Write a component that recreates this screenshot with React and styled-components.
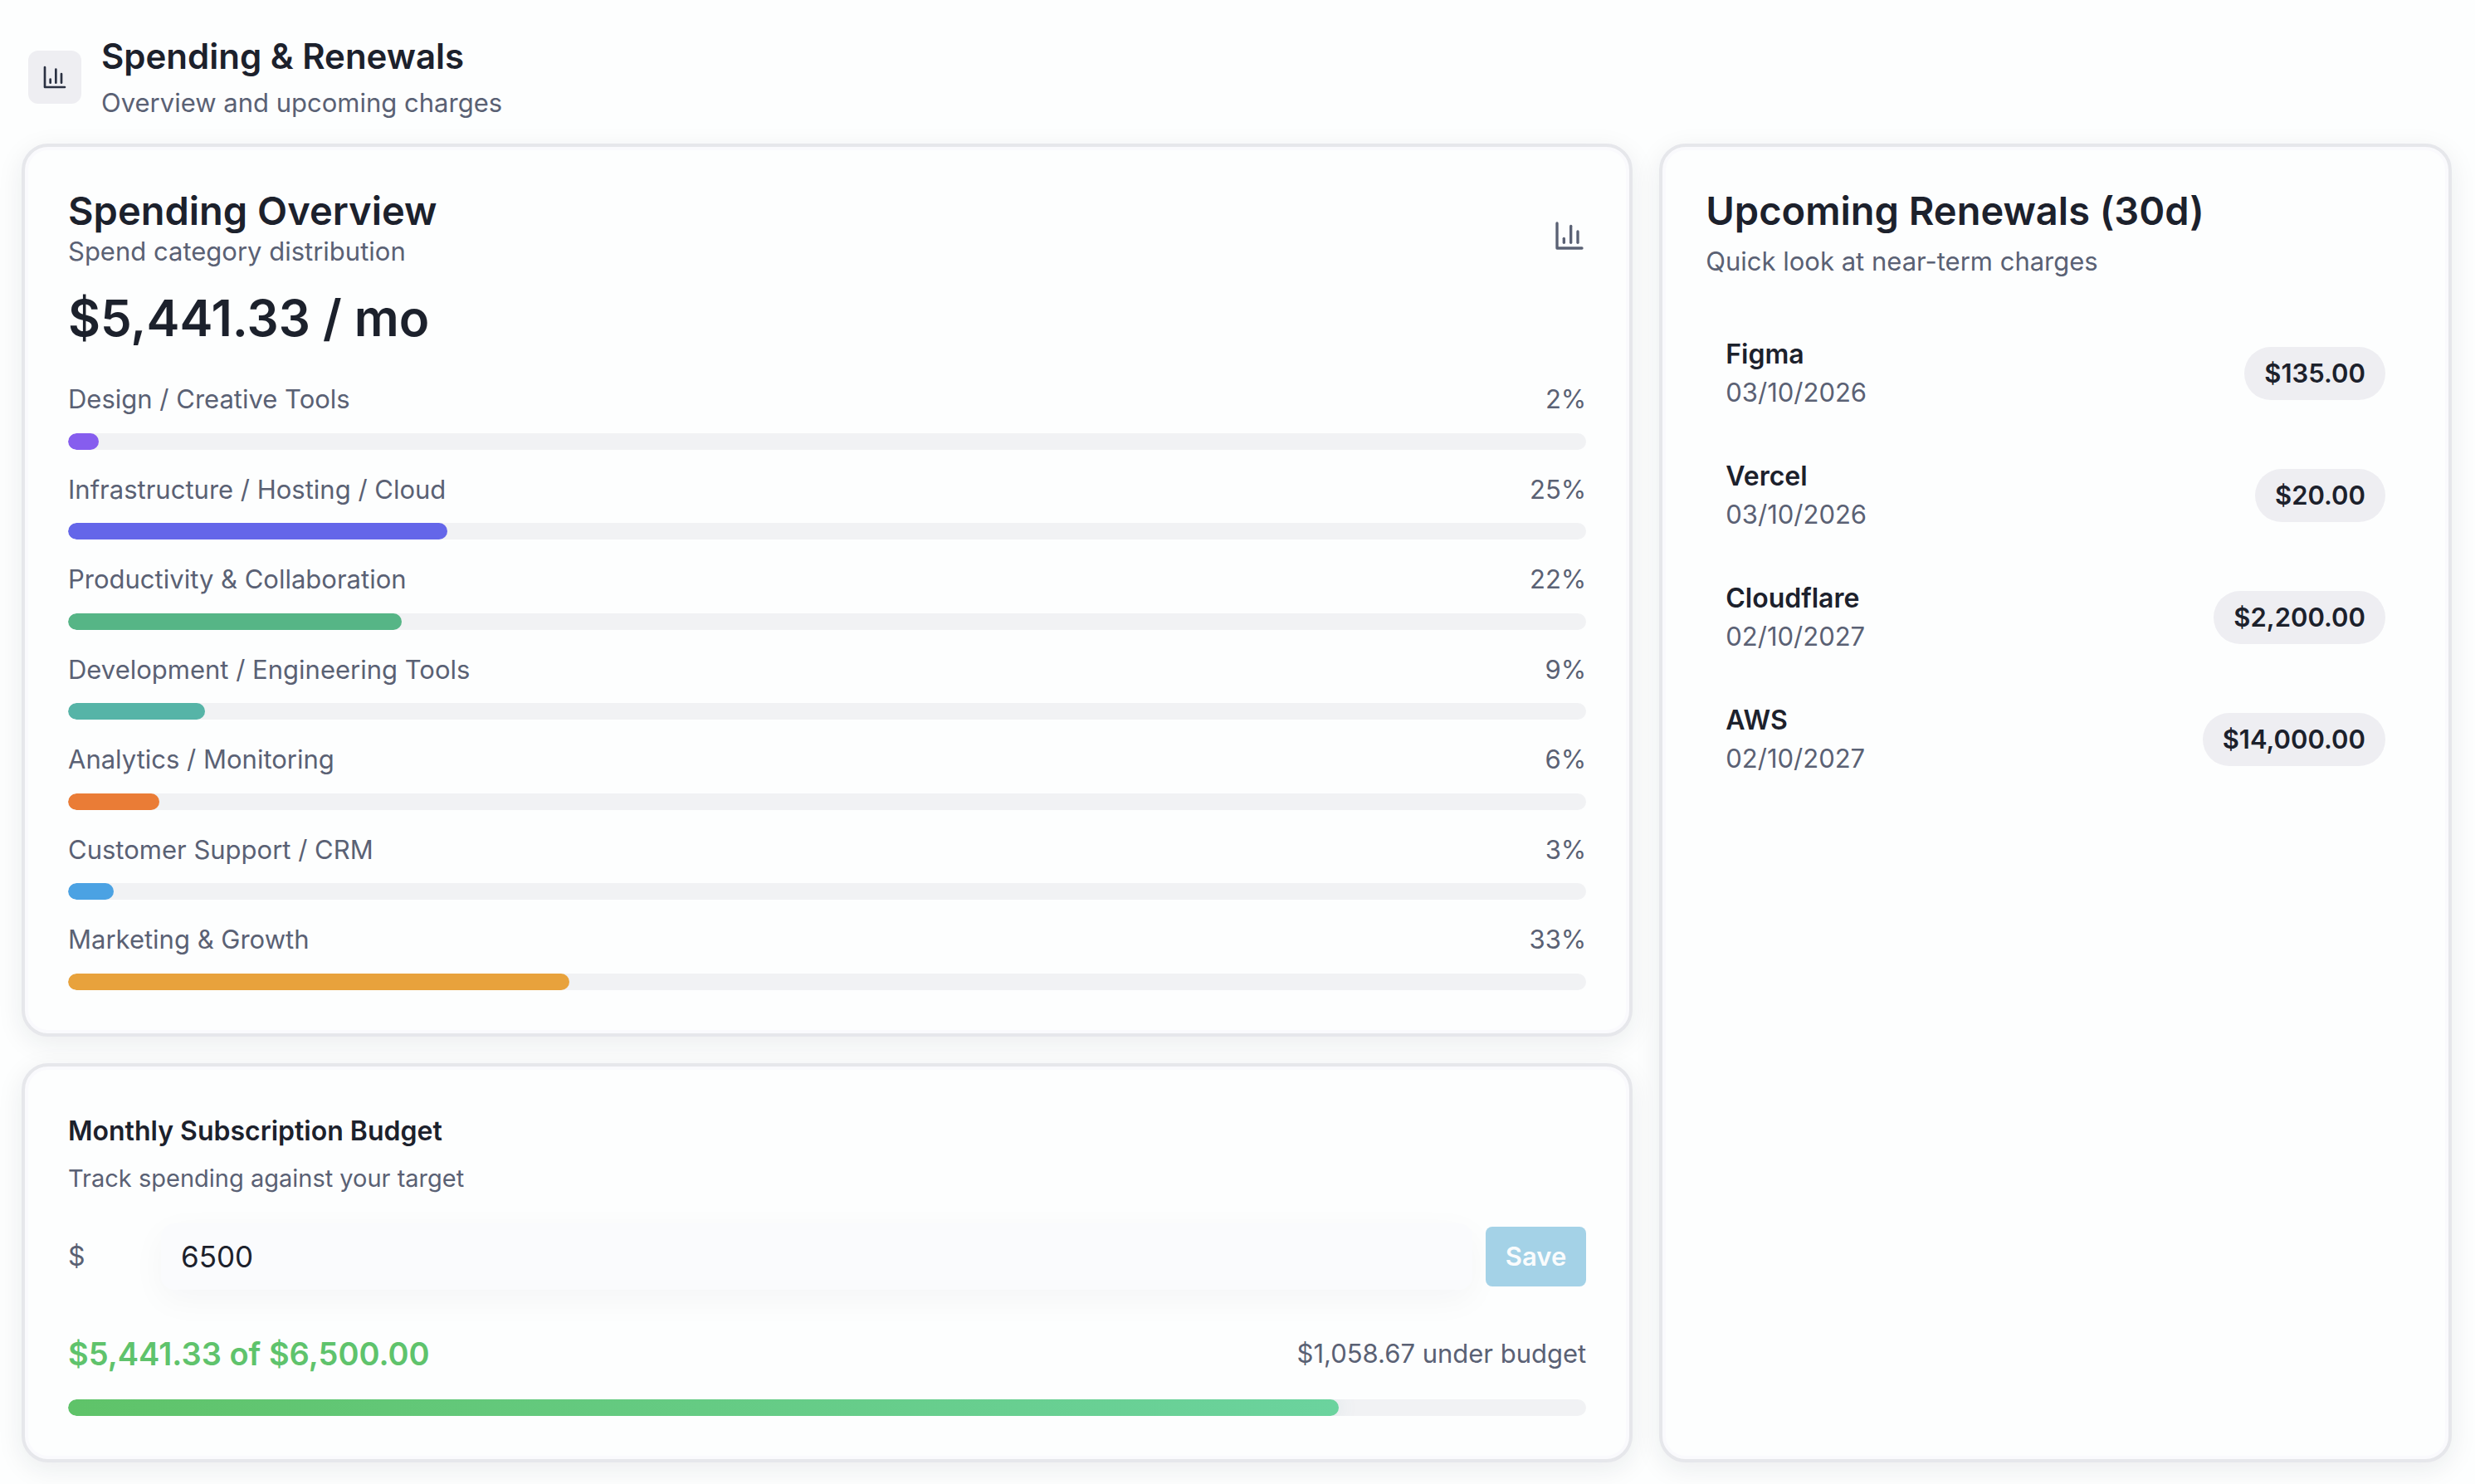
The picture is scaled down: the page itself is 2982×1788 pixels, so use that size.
import React, { useState } from 'react';
import styled, { createGlobalStyle } from 'styled-components';

const color = {
  page: '#fdfefe',
  ink: '#1c212c',
  muted: '#5a6174',
  line: '#e6e7eb',
  track: '#f1f2f4',
  chip: '#eeeef2',
  green: '#5fc36c',
};

const GlobalStyle = createGlobalStyle`
  *, *::before, *::after { box-sizing: border-box; }
  body {
    margin: 0;
    background: ${color.page};
    color: ${color.ink};
    font-family: Inter, "Liberation Sans", sans-serif;
    font-size: 31px;
    line-height: 47px;
  }
  h1, h2, p, ul { margin: 0; padding: 0; }
  ul { list-style: none; }
`;

const Page = styled.main`
  padding: 38px 28px 26px 26px;
`;

const PageHeader = styled.header`
  display: flex;
  align-items: center;
  gap: 24px;
  padding: 0 8px;
  margin-bottom: 26px;
`;

const IconTile = styled.span`
  display: grid;
  place-items: center;
  width: 64px;
  height: 64px;
  border-radius: 12px;
  background: ${color.chip};
  color: #2a3142;
`;

const PageTitle = styled.h1`
  font-size: 42px;
  font-weight: 600;
  line-height: 60px;
  margin-bottom: 2px;
`;

const Muted = styled.p`
  color: ${color.muted};
`;

const Board = styled.div`
  display: grid;
  grid-template-columns: minmax(0, 61fr) minmax(0, 30fr);
  gap: 32px;
`;

const Column = styled.div`
  display: flex;
  flex-direction: column;
  gap: 32px;
`;

const Card = styled.section`
  padding: 52px;
  border: 4px solid ${color.line};
  border-radius: 32px;
  background: ${color.page};
  box-shadow:
    inset 0 0 0 4px #fafafd,
    0 8px 32px rgba(26, 32, 52, 0.08);
`;

const CardTitle = styled.h2`
  font-size: 47px;
  font-weight: 600;
  line-height: 50px;
  margin-bottom: ${(p) => (p.$spaced ? '12px' : '0')};
`;

const CardHeader = styled.div`
  display: flex;
  align-items: center;
  justify-content: space-between;
  color: ${color.muted};
`;

const CardHeading = styled.div`
  padding-bottom: 12px;

  ${CardTitle} { color: ${color.ink}; }
`;

const Amount = styled.p`
  margin: 10px 0 40px;
  font-size: 60px;
  font-weight: 600;
  line-height: 70px;
`;

const Categories = styled.ul`
  display: flex;
  flex-direction: column;
  gap: 25px;
`;

const CategoryLabel = styled.div`
  display: flex;
  justify-content: space-between;
  margin-bottom: 17px;
  color: ${color.muted};
  line-height: 1.5;
`;

const Track = styled.div`
  height: 20px;
  border-radius: 10px;
  background: ${color.track};
  overflow: hidden;
`;

const Fill = styled.div`
  height: 100%;
  border-radius: 10px;
  background: ${(p) => p.$paint};
  box-shadow: ${(p) => (p.$glow ? '0 0 24px rgba(90, 150, 160, 0.16)' : 'none')};
`;

const BudgetTitle = styled.h2`
  font-size: 32px;
  font-weight: 600;
  line-height: 52px;
  margin-bottom: 10px;
`;

const BudgetNote = styled.p`
  color: ${color.muted};
  font-size: 29px;
  line-height: 42px;
`;

const BudgetForm = styled.form`
  display: grid;
  grid-template-columns: 96px minmax(0, 1fr) auto;
  align-items: center;
  gap: 16px;
  margin: 33px 0 49px;
`;

const Currency = styled.label`
  color: ${color.muted};
  font-size: 32px;
`;

const BudgetInput = styled.input`
  width: 100%;
  height: 80px;
  padding: 0 24px;
  border: 0;
  border-radius: 16px;
  outline: none;
  background: #fafbfd;
  box-shadow: 0 12px 40px rgba(26, 32, 52, 0.04);
  color: ${color.ink};
  font: inherit;
  font-size: 35px;
`;

const SaveButton = styled.button`
  position: relative;
  height: 72px;
  padding: 0 24px;
  border: 0;
  border-radius: 8px;
  background: #a4d2e7;
  color: #fafcfd;
  font: inherit;
  font-size: 31px;
  font-weight: 600;
`;

const BudgetStatus = styled.div`
  display: flex;
  align-items: center;
  justify-content: space-between;
  margin-bottom: 27px;
`;

const BudgetUsed = styled.p`
  color: ${color.green};
  font-size: 38px;
  font-weight: 600;
  line-height: 56px;
`;

const Renewals = styled.ul`
  display: flex;
  flex-direction: column;
  gap: 15px;
  margin-top: 46px;
`;

const Renewal = styled.li`
  display: flex;
  align-items: center;
  justify-content: space-between;
  padding: 20px 24px;
  line-height: 46px;
`;

const Vendor = styled.p`
  font-size: 32px;
  font-weight: 600;
`;

const Price = styled.span`
  padding: 9px 24px;
  border-radius: 32px;
  background: ${color.chip};
  font-weight: 600;
`;

const ChartIcon = ({ size }) => (
  <svg
    width={size}
    height={size}
    viewBox="0 0 24 24"
    fill="none"
    stroke="currentColor"
    strokeWidth="2"
    strokeLinecap="round"
    strokeLinejoin="round"
    aria-hidden="true"
  >
    <path d="M3 3v18h18" />
    <path d="M18 17V9" />
    <path d="M13 17V5" />
    <path d="M8 17v-3" />
  </svg>
);

const categories = [
  { name: 'Design / Creative Tools', share: 2, paint: '#865dee' },
  { name: 'Infrastructure / Hosting / Cloud', share: 25, paint: '#6466e9' },
  { name: 'Productivity & Collaboration', share: 22, paint: '#56b586' },
  { name: 'Development / Engineering Tools', share: 9, paint: '#56b4a7' },
  { name: 'Analytics / Monitoring', share: 6, paint: '#ea7c36' },
  { name: 'Customer Support / CRM', share: 3, paint: '#4ba2e3' },
  { name: 'Marketing & Growth', share: 33, paint: '#e8a23c' },
];

const renewals = [
  { vendor: 'Figma', date: '03/10/2026', price: '$135.00' },
  { vendor: 'Vercel', date: '03/10/2026', price: '$20.00' },
  { vendor: 'Cloudflare', date: '02/10/2027', price: '$2,200.00' },
  { vendor: 'AWS', date: '02/10/2027', price: '$14,000.00' },
];

export default function App() {
  const [budget, setBudget] = useState('6500');
  const spent = 5441.33;
  const target = 6500;

  return (
    <>
      <GlobalStyle />
      <Page>
        <PageHeader>
          <IconTile><ChartIcon size={32} /></IconTile>
          <div>
            <PageTitle>Spending &amp; Renewals</PageTitle>
            <Muted>Overview and upcoming charges</Muted>
          </div>
        </PageHeader>

        <Board>
          <Column>
            <Card>
              <CardHeader>
                <CardHeading>
                  <CardTitle>Spending Overview</CardTitle>
                  <Muted>Spend category distribution</Muted>
                </CardHeading>
                <ChartIcon size={40} />
              </CardHeader>
              <Amount>$5,441.33 / mo</Amount>
              <Categories>
                {categories.map((c) => (
                  <li key={c.name}>
                    <CategoryLabel>
                      <span>{c.name}</span>
                      <span>{c.share}%</span>
                    </CategoryLabel>
                    <Track>
                      <Fill $paint={c.paint} style={{ width: `${c.share}%` }} />
                    </Track>
                  </li>
                ))}
              </Categories>
            </Card>

            <Card>
              <BudgetTitle>Monthly Subscription Budget</BudgetTitle>
              <BudgetNote>Track spending against your target</BudgetNote>
              <BudgetForm onSubmit={(e) => e.preventDefault()}>
                <Currency htmlFor="budget">$</Currency>
                <BudgetInput
                  id="budget"
                  inputMode="decimal"
                  value={budget}
                  onChange={(e) => setBudget(e.target.value)}
                />
                <SaveButton type="submit" disabled={Number(budget) === target}>Save</SaveButton>
              </BudgetForm>
              <BudgetStatus>
                <BudgetUsed>$5,441.33 of $6,500.00</BudgetUsed>
                <Muted>$1,058.67 under budget</Muted>
              </BudgetStatus>
              <Track>
                <Fill
                  $glow
                  $paint="linear-gradient(90deg, #5fc369, #6bd39e)"
                  style={{ width: `${(spent / target) * 100}%` }}
                />
              </Track>
            </Card>
          </Column>

          <Card>
            <CardTitle $spaced>Upcoming Renewals (30d)</CardTitle>
            <Muted>Quick look at near-term charges</Muted>
            <Renewals>
              {renewals.map((r) => (
                <Renewal key={r.vendor}>
                  <div>
                    <Vendor>{r.vendor}</Vendor>
                    <Muted>{r.date}</Muted>
                  </div>
                  <Price>{r.price}</Price>
                </Renewal>
              ))}
            </Renewals>
          </Card>
        </Board>
      </Page>
    </>
  );
}
